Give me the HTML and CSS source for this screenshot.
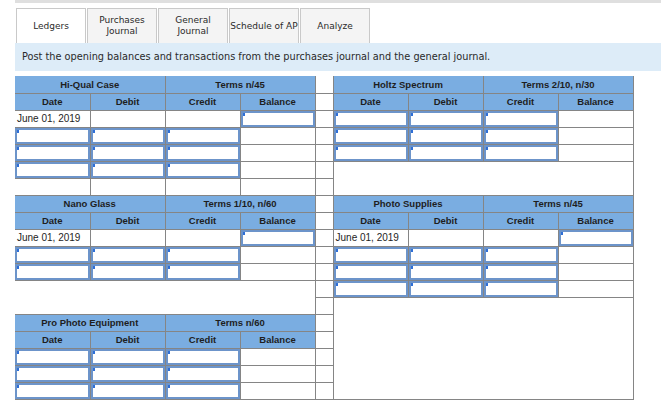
FILE: index.html
```html
<!DOCTYPE html>
<html>
<head>
<meta charset="utf-8">
<link rel="stylesheet" href="styles.css">
</head>
<body>
<div class="page">
  <div class="topbar"></div>
  <div class="tabs">
    <div class="tab active">Ledgers</div>
    <div class="tab">Purchases<br>Journal</div>
    <div class="tab">General<br>Journal</div>
    <div class="tab">Schedule of AP</div>
    <div class="tab">Analyze</div>
  </div>
  <div class="instr">Post the opening balances and transactions from the purchases journal and the general journal.</div>
  <table class="ledger">
    <colgroup>
      <col class="cw"><col class="cw"><col class="cw"><col class="cw">
      <col class="sw">
      <col class="cw"><col class="cw"><col class="cw"><col class="cw">
    </colgroup>
    <tr class="first">
      <td class="hd c1" colspan="2">Hi-Qual Case</td><td class="hd" colspan="2">Terms n/45</td>
      <td class="sp"></td>
      <td class="hd" colspan="2">Holtz Spectrum</td><td class="hd" colspan="2">Terms 2/10, n/30</td>
    </tr>
    <tr>
      <td class="hd c1">Date</td><td class="hd">Debit</td><td class="hd">Credit</td><td class="hd">Balance</td>
      <td class="sp"></td>
      <td class="hd">Date</td><td class="hd">Debit</td><td class="hd">Credit</td><td class="hd">Balance</td>
    </tr>
    <tr>
      <td class="c1 txt">June 01, 2019</td><td></td><td></td><td><div class="box"></div></td>
      <td class="sp"></td>
      <td><div class="box"></div></td><td><div class="box"></div></td><td><div class="box"></div></td><td></td>
    </tr>
    <tr>
      <td class="c1"><div class="box"></div></td><td><div class="box"></div></td><td><div class="box"></div></td><td></td>
      <td class="sp"></td>
      <td><div class="box"></div></td><td><div class="box"></div></td><td><div class="box"></div></td><td></td>
    </tr>
    <tr>
      <td class="c1"><div class="box"></div></td><td><div class="box"></div></td><td><div class="box"></div></td><td></td>
      <td class="sp"></td>
      <td><div class="box"></div></td><td><div class="box"></div></td><td><div class="box"></div></td><td></td>
    </tr>
    <tr>
      <td class="c1"><div class="box"></div></td><td><div class="box"></div></td><td><div class="box"></div></td><td></td>
      <td class="sp"></td>
      <td class="blank" colspan="4" rowspan="2"></td>
    </tr>
    <tr>
      <td class="c1"></td><td></td><td></td><td></td>
      <td class="sp"></td>
    </tr>
    <tr>
      <td class="hd c1" colspan="2">Nano Glass</td><td class="hd" colspan="2">Terms 1/10, n/60</td>
      <td class="sp"></td>
      <td class="hd" colspan="2">Photo Supplies</td><td class="hd" colspan="2">Terms n/45</td>
    </tr>
    <tr>
      <td class="hd c1">Date</td><td class="hd">Debit</td><td class="hd">Credit</td><td class="hd">Balance</td>
      <td class="sp"></td>
      <td class="hd">Date</td><td class="hd">Debit</td><td class="hd">Credit</td><td class="hd">Balance</td>
    </tr>
    <tr>
      <td class="c1 txt">June 01, 2019</td><td></td><td></td><td><div class="box"></div></td>
      <td class="sp"></td>
      <td class="txt">June 01, 2019</td><td></td><td></td><td><div class="box"></div></td>
    </tr>
    <tr>
      <td class="c1"><div class="box"></div></td><td><div class="box"></div></td><td><div class="box"></div></td><td></td>
      <td class="sp"></td>
      <td><div class="box"></div></td><td><div class="box"></div></td><td><div class="box"></div></td><td></td>
    </tr>
    <tr>
      <td class="c1"><div class="box"></div></td><td><div class="box"></div></td><td><div class="box"></div></td><td></td>
      <td class="sp"></td>
      <td><div class="box"></div></td><td><div class="box"></div></td><td><div class="box"></div></td><td></td>
    </tr>
    <tr>
      <td class="void c1" colspan="4" rowspan="2"></td>
      <td class="sp"></td>
      <td><div class="box"></div></td><td><div class="box"></div></td><td><div class="box"></div></td><td></td>
    </tr>
    <tr>
      <td class="sp"></td>
      <td class="blank" colspan="4" rowspan="6"></td>
    </tr>
    <tr>
      <td class="hd c1" colspan="2">Pro Photo Equipment</td><td class="hd" colspan="2">Terms n/60</td>
      <td class="sp"></td>
    </tr>
    <tr>
      <td class="hd c1">Date</td><td class="hd">Debit</td><td class="hd">Credit</td><td class="hd">Balance</td>
      <td class="sp"></td>
    </tr>
    <tr>
      <td class="c1"><div class="box"></div></td><td><div class="box"></div></td><td><div class="box"></div></td><td></td>
      <td class="sp"></td>
    </tr>
    <tr>
      <td class="c1"><div class="box"></div></td><td><div class="box"></div></td><td><div class="box"></div></td><td></td>
      <td class="sp"></td>
    </tr>
    <tr>
      <td class="c1"><div class="box"></div></td><td><div class="box"></div></td><td><div class="box"></div></td><td></td>
      <td class="sp"></td>
    </tr>
  </table>
</div>
</body>
</html>
```

FILE: styles.css
```css
html, body {
  margin: 0;
  padding: 0;
  background: #ffffff;
}

.page {
  padding-left: 15px;
}

.topbar {
  height: 3px;
  background: #dfdfdf;
  margin-bottom: 5px;
}

.tabs {
  display: flex;
  gap: 1px;
  padding-left: 1px;
}

.tab {
  box-sizing: border-box;
  width: 70px;
  height: 35px;
  border: 1px solid #c9c9c9;
  border-bottom: none;
  background: #f4f4f4;
  display: flex;
  align-items: center;
  justify-content: center;
  text-align: center;
  font-family: "DejaVu Sans", Verdana, sans-serif;
  font-size: 9px;
  line-height: 11px;
  color: #2a2a2a;
}

.tab.active {
  background: #ffffff;
}

.instr {
  height: 28px;
  line-height: 28px;
  background: #ddecf8;
  padding-left: 7px;
  font-family: "DejaVu Sans", Verdana, sans-serif;
  font-size: 9.75px;
  color: #2a2a2a;
  white-space: nowrap;
}

.ledger {
  margin-top: 5px;
  border-collapse: collapse;
  table-layout: fixed;
  width: 618px;
  font-family: "Liberation Sans", Arial, sans-serif;
  color: #1e1e1e;
}

.cw { width: 75px; }
.sw { width: 18px; }

.ledger tr {
  height: 17px;
}

.ledger td {
  border: 1px solid #858585;
  padding: 0;
  height: 16px;
  vertical-align: middle;
}

.ledger tr.first td {
  border-top: none;
}

.ledger td.c1 {
  border-left: none;
}

.ledger td.hd {
  background: #7aade1;
  font-weight: bold;
  font-size: 9.5px;
  text-align: center;
}

.ledger td.txt {
  font-size: 10px;
  padding-left: 2px;
  white-space: nowrap;
}

.ledger td.void {
  border-left: none;
  border-bottom: none;
}

.box {
  position: relative;
  box-sizing: border-box;
  height: 16px;
  border: 2px solid #6c94ca;
  background: #ffffff;
}

.box::before {
  content: "";
  position: absolute;
  top: 0;
  left: 0;
  width: 2px;
  height: 3px;
  background: #2f6fd6;
}
```
